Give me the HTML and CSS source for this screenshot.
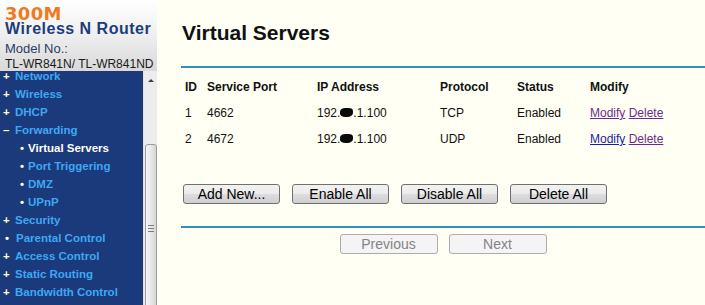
FILE: index.html
```html
<!DOCTYPE html>
<html lang="en">
<head>
  <meta charset="UTF-8" />
  <title>Virtual Servers</title>
  <link rel="stylesheet" href="styles.css">
</head>
<body>
  <div class="side">
    <div class="brand">
      <div class="speed">300M</div>
      <div class="product">Wireless N Router</div>
      <div class="model">Model No.:</div>
      <div class="model-id">TL-WR841N/ TL-WR841ND</div>
    </div>
    <div class="menu-wrap">
      <ul class="menu">
        <li><span class="ico">+</span>Network</li>
        <li><span class="ico">+</span>Wireless</li>
        <li><span class="ico">+</span>DHCP</li>
        <li><span class="ico">&ndash;</span>Forwarding</li>
        <li class="sub active"><span class="ico">&bull;</span>Virtual Servers</li>
        <li class="sub"><span class="ico">&bull;</span>Port Triggering</li>
        <li class="sub"><span class="ico">&bull;</span>DMZ</li>
        <li class="sub"><span class="ico">&bull;</span>UPnP</li>
        <li><span class="ico">+</span>Security</li>
        <li><span class="ico dot">&bull;</span>Parental Control</li>
        <li><span class="ico">+</span>Access Control</li>
        <li><span class="ico">+</span>Static Routing</li>
        <li><span class="ico">+</span>Bandwidth Control</li>
      </ul>
      <div class="scrollbar">
        <div class="arrow"></div>
        <div class="thumb"><div class="grip"></div></div>
      </div>
    </div>
  </div>

  <div class="main">
    <h1>Virtual Servers</h1>
    <div class="rule"></div>

    <table class="servers">
      <colgroup>
        <col class="c-id"><col class="c-port"><col class="c-ip"><col class="c-proto"><col class="c-status"><col>
      </colgroup>
      <tr>
        <th>ID</th><th>Service Port</th><th>IP Address</th><th>Protocol</th><th>Status</th><th>Modify</th>
      </tr>
      <tr>
        <td>1</td><td>4662</td><td>192.<span class="blob"></span>.1.100</td><td>TCP</td><td>Enabled</td>
        <td><a href="#" class="visited">Modify</a> <a href="#" class="visited">Delete</a></td>
      </tr>
      <tr>
        <td>2</td><td>4672</td><td>192.<span class="blob"></span>.1.100</td><td>UDP</td><td>Enabled</td>
        <td><a href="#">Modify</a> <a href="#" class="visited">Delete</a></td>
      </tr>
    </table>

    <div class="actions">
      <button>Add New...</button>
      <button>Enable All</button>
      <button>Disable All</button>
      <button>Delete All</button>
    </div>

    <div class="rule rule-low"></div>

    <div class="pager">
      <button disabled>Previous</button>
      <button disabled>Next</button>
    </div>
  </div>
</body>
</html>
```

FILE: styles.css
```css
body {
  margin: 0;
  height: 305px;
  overflow: hidden;
  display: flex;
  font-family: "Liberation Sans", Arial, sans-serif;
  background: #fffff3;
}

/* left frame */
.side {
  width: 157px;
  flex: none;
  display: flex;
  flex-direction: column;
}
.brand {
  height: 71px;
  box-sizing: border-box;
  padding: 6px 0 0 5px;
  overflow: hidden;
  background: linear-gradient(#ffffff, #f2f2f2 40%, #d9d9d9);
}
.speed {
  font-family: "DejaVu Sans", sans-serif;
  font-weight: bold;
  font-size: 18px;
  line-height: 16px;
  letter-spacing: 0.3px;
  color: #f07a1e;
}
.product {
  margin-top: -1px;
  font-weight: bold;
  font-size: 16px;
  line-height: 15px;
  letter-spacing: 0.5px;
  color: #1d3c7c;
}
.model {
  margin-top: 5px;
  font-size: 13px;
  line-height: 15px;
  color: #2b3d66;
}
.model-id {
  margin-top: 1px;
  font-size: 12px;
  line-height: 14px;
  color: #1a1a1a;
}

.menu-wrap {
  flex: 1;
  display: flex;
  overflow: hidden;
}
.menu {
  width: 143px;
  margin: 0;
  padding: 0;
  list-style: none;
  background: #1a3a7c;
  overflow: hidden;
}
.menu li {
  padding-left: 3px;
  font-size: 11.5px;
  font-weight: bold;
  line-height: 18px;
  color: #3ea8f2;
  white-space: nowrap;
}
.menu li:first-child {
  margin-top: -4px;
}
.menu .ico {
  display: inline-block;
  width: 12px;
  color: #fffbd6;
}
.menu .ico.dot {
  width: 13px;
  padding-left: 2px;
  box-sizing: border-box;
}
.menu li.sub {
  padding-left: 20px;
}
.menu li.sub .ico {
  width: 8px;
}
.menu li.active {
  color: #ffffff;
}

.scrollbar {
  width: 14px;
  background: #ececec;
  border-left: 1px solid #e2e2e2;
  box-sizing: border-box;
  display: flex;
  flex-direction: column;
  align-items: center;
}
.arrow {
  margin-top: 8px;
  width: 0;
  height: 0;
  border-left: 3px solid transparent;
  border-right: 3px solid transparent;
  border-bottom: 3px solid #3a3a3a;
}
.thumb {
  margin-top: 62px;
  width: 12px;
  height: 168px;
  flex: none;
  box-sizing: border-box;
  border: 1px solid #9c9c9c;
  border-radius: 3px;
  background: linear-gradient(90deg, #f6f6f6, #e8e8e8 50%, #d6d6d6);
  display: flex;
  align-items: center;
  justify-content: center;
}
.grip {
  width: 6px;
  height: 7px;
  background: repeating-linear-gradient(#7a7a7a 0 1px, transparent 1px 3px);
}

/* content */
.main {
  flex: 1;
  padding-left: 24px;
}
h1 {
  margin: 21px 0 0 1px;
  font-size: 21px;
  line-height: 24px;
  color: #111;
}
.rule {
  margin-top: 21px;
  height: 2px;
  background: #2b92b9;
}
.rule-low {
  margin-top: 22px;
}

.servers {
  margin-top: 6px;
  border-collapse: collapse;
  table-layout: fixed;
  width: 500px;
  font-size: 12px;
  color: #111;
}
.c-id { width: 22px; }
.c-port { width: 110px; }
.c-ip { width: 123px; }
.c-proto { width: 77px; }
.c-status { width: 73px; }
.servers th,
.servers td {
  height: 26px;
  padding: 0 0 0 4px;
  text-align: left;
  white-space: nowrap;
}
.servers a {
  color: #1c1ca0;
}
.servers a.visited {
  color: #6a2b8e;
}
.blob {
  display: inline-block;
  width: 13px;
  height: 9px;
  background: #0a0a0a;
  border-radius: 40% 35% 45% 40%;
}

button {
  width: 97px;
  height: 20px;
  padding: 0;
  font-family: "Liberation Sans", Arial, sans-serif;
  font-size: 14px;
  color: #000;
  border: 1px solid #707070;
  border-radius: 3px;
  background: linear-gradient(#f2f2f2, #ebebeb 50%, #dddddd 50%, #cfcfcf);
}
button:disabled {
  color: #838383;
  border-color: #adadad;
  background: #f4f4f4;
}
.actions {
  margin-top: 32px;
  padding-left: 2px;
  display: flex;
  gap: 12px;
}
.pager {
  margin-top: 6px;
  display: flex;
  justify-content: center;
  gap: 11px;
}
.pager button {
  width: 98px;
}
```
